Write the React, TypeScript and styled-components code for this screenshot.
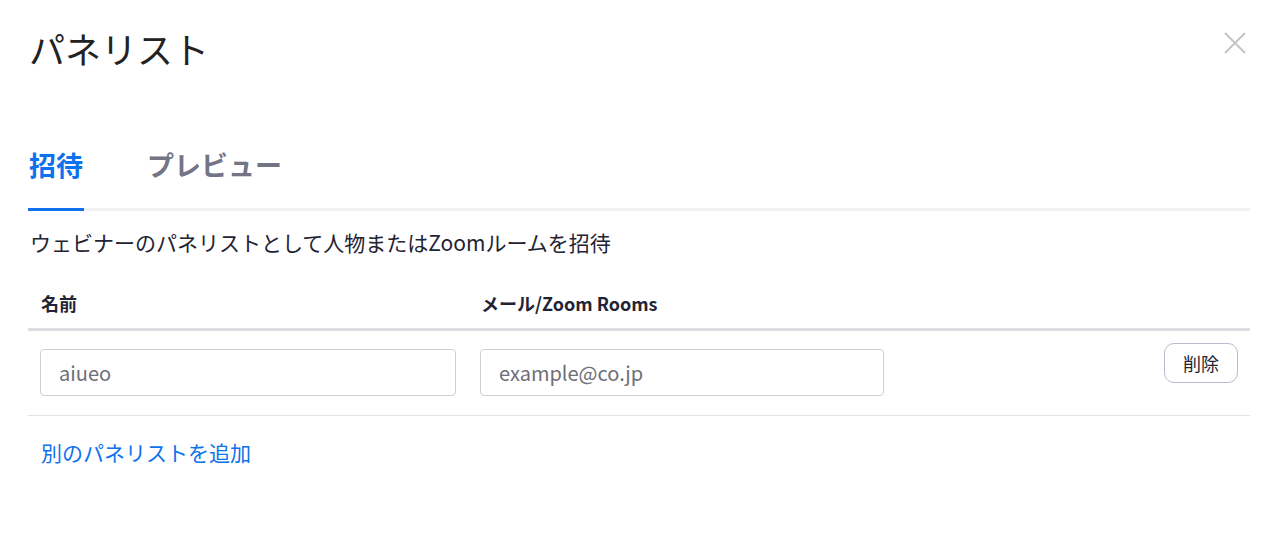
import React from 'react';
import styled, { createGlobalStyle } from 'styled-components';

const GlobalStyle = createGlobalStyle`
  html, body {
    margin: 0;
    padding: 0;
    background: #fff;
  }
  body {
    font-family: "Noto Sans CJK JP", "Noto Sans", sans-serif;
    color: #232333;
  }
  * {
    box-sizing: border-box;
  }
`;

const Dialog = styled.div`
  padding: 0 23px 40px 28px;
`;

const Header = styled.div`
  display: flex;
  justify-content: space-between;
  align-items: flex-start;
  padding-top: 22px;
`;

const Title = styled.h1`
  margin: 0 0 0 1px;
  font-size: 36px;
  line-height: 52px;
  font-weight: 400;
  color: #222;
`;

const CloseButton = styled.button`
  border: 0;
  background: none;
  padding: 0;
  margin: 10px 4px 0 0;
  width: 22px;
  height: 22px;
  cursor: pointer;
  color: #c4c4c8;
  display: flex;
`;

const TabList = styled.div`
  display: flex;
  gap: 62px;
  margin-top: 72px;
  border-bottom: 3px solid #f1f1f4;
`;

const Tab = styled.button<{ $active?: boolean }>`
  border: 0;
  background: none;
  font-family: inherit;
  font-size: 27px;
  line-height: 38px;
  font-weight: 700;
  padding: 0 1px 24px 1px;
  margin-bottom: -3px;
  color: ${p => (p.$active ? '#0e72ed' : '#747487')};
  border-bottom: 3px solid ${p => (p.$active ? '#0e72ed' : 'transparent')};
  cursor: pointer;
`;

const Description = styled.p`
  margin: 16px 0 0 2px;
  font-size: 21px;
  line-height: 30px;
  color: #232333;
`;

const Grid = styled.div`
  display: grid;
  grid-template-columns: 440px 428px 1fr;
`;

const HeadRow = styled(Grid)`
  margin-top: 25px;
  border-bottom: 3px solid #dddde2;
`;

const HeadCell = styled.div`
  padding: 9px 12px 13px 13px;
  font-size: 18px;
  line-height: 24px;
  font-weight: 700;
  color: #232333;
`;

const BodyRow = styled(Grid)`
  border-bottom: 1px solid #e2e2e6;
`;

const Cell = styled.div<{ $end?: boolean }>`
  display: flex;
  justify-content: ${p => (p.$end ? 'flex-end' : 'flex-start')};
  padding: ${p => (p.$end ? '12px 12px 32px' : '18px 12px 19px')};
`;

const TextInput = styled.input`
  width: 100%;
  height: 47px;
  border: 1px solid #cfcfd4;
  border-radius: 4px;
  padding: 0 18px;
  font-family: inherit;
  font-size: 20px;
  color: #232333;
  outline: none;

  &::placeholder {
    color: #6e6e78;
  }
`;

const DeleteButton = styled.button`
  width: 74px;
  height: 40px;
  border: 1px solid #babacc;
  border-radius: 10px;
  background: #fff;
  font-family: inherit;
  font-size: 18px;
  color: #232333;
  cursor: pointer;
`;

const AddLink = styled.a`
  display: inline-block;
  margin: 21px 0 0 13px;
  font-size: 21px;
  line-height: 30px;
  color: #0e72ed;
  text-decoration: none;
  cursor: pointer;
`;

export default function App() {
  return (
    <>
      <GlobalStyle />
      <Dialog>
        <Header>
          <Title>パネリスト</Title>
          <CloseButton aria-label="閉じる">
            <svg width="22" height="22" viewBox="0 0 22 22">
              <path d="M1 1 L21 21 M21 1 L1 21" stroke="currentColor" strokeWidth="2" fill="none" />
            </svg>
          </CloseButton>
        </Header>

        <TabList>
          <Tab $active>招待</Tab>
          <Tab>プレビュー</Tab>
        </TabList>

        <Description>ウェビナーのパネリストとして人物またはZoomルームを招待</Description>

        <HeadRow>
          <HeadCell>名前</HeadCell>
          <HeadCell>メール/Zoom Rooms</HeadCell>
          <HeadCell />
        </HeadRow>

        <BodyRow>
          <Cell>
            <TextInput placeholder="aiueo" />
          </Cell>
          <Cell>
            <TextInput placeholder="example@co.jp" />
          </Cell>
          <Cell $end>
            <DeleteButton>削除</DeleteButton>
          </Cell>
        </BodyRow>

        <AddLink>別のパネリストを追加</AddLink>
      </Dialog>
    </>
  );
}
